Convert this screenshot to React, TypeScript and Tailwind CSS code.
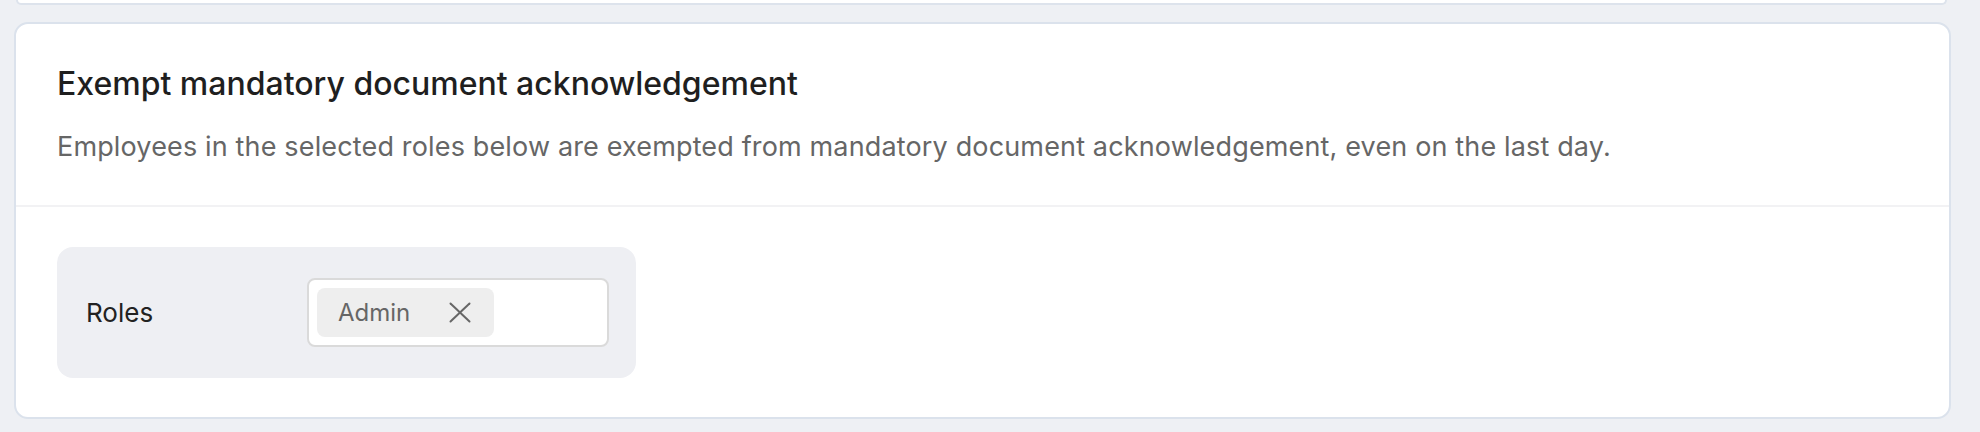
export default function App() {
  return (
    <div
      className="min-h-[432px] bg-[#eef0f4] pl-[14px] pr-[29px]"
      style={{ fontFamily: 'Inter, Lato, sans-serif' }}
    >
      <div className="h-[5px] rounded-b-[12px] border-x-2 border-b-2 border-[#dde3ec] bg-white ml-[2px] mr-[4px]" />

      <div className="mt-[17px] rounded-[14px] border-2 border-[#dbe2ec] bg-white">
        <div className="px-[41px] pt-[40px] pb-[41px] border-b-2 border-[#f2f2f4]">
          <h2 className="text-[32px] leading-[40px] text-[#1f1f1f] font-medium">
            Exempt mandatory document acknowledgement
          </h2>
          <p className="mt-[26px] text-[27px] leading-[34px] tracking-[0.15px] text-[#666666]">
            Employees in the selected roles below are exempted from mandatory document acknowledgement, even on the last day.
          </p>
        </div>

        <div className="px-[41px] pt-[40px] pb-[39px]">
          <div className="flex w-[579px] items-center rounded-[16px] bg-[#eeeff3] pl-[29px] pr-[27px] py-[31px]">
            <span className="w-[221px] text-[26px] text-[#222222]">Roles</span>
            <div className="flex h-[69px] flex-1 items-center rounded-[8px] border-2 border-[#dadada] bg-white pl-[8px]">
              <div className="flex h-[49px] items-center rounded-[8px] bg-[#eeeeee] pl-[21px] pr-[23px]">
                <span className="text-[24px] text-[#666666]">Admin</span>
                <svg
                  className="ml-[39px]"
                  width="22"
                  height="21"
                  viewBox="0 0 22 21"
                  fill="none"
                  stroke="#666666"
                  strokeWidth="2"
                  strokeLinecap="round"
                >
                  <line x1="1.5" y1="1.5" x2="20.5" y2="19.5" />
                  <line x1="20.5" y1="1.5" x2="1.5" y2="19.5" />
                </svg>
              </div>
            </div>
          </div>
        </div>
      </div>
    </div>
  )
}
